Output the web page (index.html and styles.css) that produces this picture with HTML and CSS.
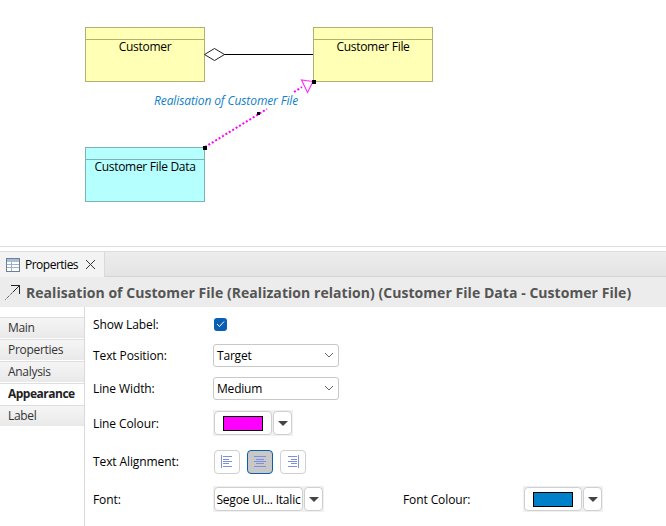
FILE: index.html
```html
<!DOCTYPE html>
<html lang="en">
<head>
  <meta charset="UTF-8" />
  <title>Properties</title>
  <link rel="stylesheet" href="styles.css">
</head>
<body>
  <!-- Diagram canvas -->
  <div class="canvas">
    <div class="node yellow node-customer"><div class="node-head"></div><div class="node-name">Customer</div></div>
    <div class="node yellow node-file"><div class="node-head"></div><div class="node-name">Customer File</div></div>
    <div class="node cyan node-data"><div class="node-head"></div><div class="node-name">Customer File Data</div></div>

    <svg class="wires" width="666" height="246" viewBox="0 0 666 246">
      <line x1="224" y1="54.5" x2="313" y2="54.5" stroke="#000" stroke-width="1"/>
      <polygon points="204.5,54.5 214.5,48.5 224.5,54.5 214.5,60.5" fill="#fff" stroke="#222" stroke-width="1"/>
      <line x1="205" y1="147" x2="267" y2="109" stroke="#ff00ff" stroke-width="2" stroke-dasharray="2 2"/>
      <line x1="294" y1="92" x2="302" y2="87" stroke="#ff00ff" stroke-width="2" stroke-dasharray="2 2"/>
      <polygon points="313,81.5 301.5,80 307.5,92.5" fill="#fff" stroke="#ff30ff" stroke-width="1.2"/>
      <rect x="203" y="146" width="4" height="4" fill="#000"/>
      <rect x="312" y="80" width="4" height="4" fill="#000"/>
      <rect x="257" y="112" width="3" height="3" fill="#000"/>
    </svg>
    <div class="wire-label">Realisation of Customer File</div>
  </div>

  <!-- Properties view -->
  <div class="view">
    <div class="tabstrip">
      <div class="view-tab">
        <svg class="tab-icon" width="15" height="14" viewBox="0 0 15 14">
          <rect x="0.5" y="0.5" width="13" height="13" fill="#fff" stroke="#6c7f96"/>
          <rect x="1" y="1" width="12" height="3" fill="#a9bdd6"/>
          <path d="M1 6.5h12M1 9.5h12M5.5 4v9" stroke="#9db1c9" fill="none"/>
        </svg>
        <span class="tab-name">Properties</span>
        <svg class="tab-close" width="11" height="11" viewBox="0 0 11 11">
          <path d="M1 1l9 9M10 1l-9 9" stroke="#333" stroke-width="1" fill="none"/>
        </svg>
      </div>
    </div>

    <div class="title-bar">
      <svg class="title-icon" width="16" height="15" viewBox="0 0 16 15">
        <path d="M0.5 14.5L8 7" stroke="#222" stroke-dasharray="1 1" fill="none"/>
        <path d="M8 7L14.5 0.5" stroke="#222" fill="none"/>
        <path d="M6 0.5h8.5V9" stroke="#222" fill="none"/>
      </svg>
      <span class="title-text">Realisation of Customer File (Realization relation) (Customer File Data - Customer File)</span>
    </div>

    <div class="panel">
      <ul class="side-tabs">
        <li>Main</li>
        <li>Properties</li>
        <li>Analysis</li>
        <li class="active">Appearance</li>
        <li>Label</li>
      </ul>

      <div class="form">
        <div class="row row-show">
          <label>Show Label:</label>
          <span class="checkbox">
            <svg width="9" height="8" viewBox="0 0 9 8"><path d="M1 4l2.5 2.5L8 1.5" stroke="#fff" stroke-width="1" fill="none"/></svg>
          </span>
        </div>
        <div class="row row-pos">
          <label>Text Position:</label>
          <div class="combo">Target<svg width="10" height="6" viewBox="0 0 10 6"><path d="M1 1l4 4 4-4" stroke="#666" fill="none"/></svg></div>
        </div>
        <div class="row row-width">
          <label>Line Width:</label>
          <div class="combo">Medium<svg width="10" height="6" viewBox="0 0 10 6"><path d="M1 1l4 4 4-4" stroke="#666" fill="none"/></svg></div>
        </div>
        <div class="row row-colour">
          <label>Line Colour:</label>
          <div class="btn-group">
            <div class="btn colour-btn"><span class="swatch magenta"></span></div>
            <div class="btn arrow-btn"><span class="arrow"></span></div>
          </div>
        </div>
        <div class="row row-align">
          <label>Text Alignment:</label>
          <div class="align-group">
            <div class="btn align-btn">
              <svg width="12" height="13" viewBox="0 0 12 13"><path d="M.5 0v13M2 1.5h9M2 4.5h6M2 6.5h9M2 8.5h6M2 11.5h9" stroke="#7d8fe0" fill="none"/></svg>
            </div>
            <div class="btn align-btn selected">
              <svg width="12" height="11" viewBox="0 0 12 11"><path d="M0 .5h12M2 3.5h8M0 5.5h12M2 7.5h8M0 10.5h12" stroke="#7d8fe0" fill="none"/></svg>
            </div>
            <div class="btn align-btn">
              <svg width="12" height="13" viewBox="0 0 12 13"><path d="M11.5 0v13M1 1.5h9M4 4.5h6M1 6.5h9M4 8.5h6M1 11.5h9" stroke="#7d8fe0" fill="none"/></svg>
            </div>
          </div>
        </div>
        <div class="row row-font">
          <label>Font:</label>
          <div class="btn-group">
            <div class="btn font-btn">Segoe UI... Italic</div>
            <div class="btn arrow-btn"><span class="arrow"></span></div>
          </div>
          <label class="font-colour-label">Font Colour:</label>
          <div class="btn-group">
            <div class="btn colour-btn"><span class="swatch blue"></span></div>
            <div class="btn arrow-btn"><span class="arrow"></span></div>
          </div>
        </div>
      </div>
    </div>
  </div>
</body>
</html>
```

FILE: styles.css
```css
* {
  box-sizing: border-box;
}

html, body {
  margin: 0;
  padding: 0;
}

body {
  width: 666px;
  height: 526px;
  overflow: hidden;
  background: #fff;
  color: #000;
  font-family: "Open Sans", Arial, sans-serif;
  font-size: 12px;
  display: flex;
  flex-direction: column;
}

/* canvas */
.canvas {
  position: relative;
  height: 247px;
  border-bottom: 1px solid #dcdcdc;
  flex: none;
}

.node {
  position: absolute;
  width: 120px;
  height: 55px;
  border: 1px solid #b0b070;
  text-align: center;
}

.node-head {
  height: 12px;
  border-bottom: 1px solid #b0b070;
}

.node-name {
  line-height: 14px;
  letter-spacing: -0.3px;
}

.yellow {
  background: #ffffb5;
}

.cyan {
  background: #b5ffff;
  border-color: #7eb2b2;
}

.cyan .node-head {
  border-color: #7eb2b2;
}

.node-customer { left: 85px; top: 27px; }
.node-file { left: 313px; top: 27px; }
.node-data { left: 85px; top: 147px; }

.wires {
  position: absolute;
  left: 0;
  top: 0;
}

.wire-label {
  position: absolute;
  left: 154px;
  top: 93px;
  line-height: 16px;
  font-style: italic;
  letter-spacing: -0.1px;
  color: #0f80c5;
  white-space: nowrap;
}

/* properties view */
.view {
  flex: 1;
  display: flex;
  flex-direction: column;
  margin-top: 4px;
  border-top: 1px solid #dcdcdc;
  min-height: 0;
}

.tabstrip {
  height: 25px;
  background: linear-gradient(#ececec, #e4e4e4);
  border-bottom: 1px solid #d4d4d4;
  flex: none;
}

.view-tab {
  width: 105px;
  height: 25px;
  background: #f3f3f3;
  border-right: 1px solid #d9d9d9;
  display: flex;
  align-items: center;
  padding-left: 6px;
}

.tab-icon {
  margin-right: 4px;
}

.tab-name {
  letter-spacing: -0.5px;
  width: 56px;
}

.tab-close {
  margin-left: 4px;
}

.title-bar {
  height: 30px;
  background: #ececec;
  display: flex;
  align-items: center;
  padding-left: 5px;
  flex: none;
}

.title-icon {
  margin-right: 5px;
}

.title-text {
  font-size: 14px;
  font-weight: bold;
  letter-spacing: 0.05px;
  color: #555;
  white-space: nowrap;
}

.panel {
  flex: 1;
  display: flex;
  min-height: 0;
}

.side-tabs {
  list-style: none;
  margin: 0;
  padding: 10px 0 0;
  width: 85px;
  border-right: 1px solid #d9d9d9;
  flex: none;
}

.side-tabs li {
  height: 22px;
  line-height: 20px;
  padding-left: 8px;
  letter-spacing: -0.3px;
  color: #333;
  background: linear-gradient(#f5f5f5, #e9e9e9);
  border-top: 1px solid #dedede;
  border-bottom: 1px solid #fff;
}

.side-tabs li.active {
  background: #fff;
  color: #222;
  font-weight: bold;
  letter-spacing: -0.5px;
}

.form {
  flex: 1;
  padding-left: 8px;
  position: relative;
}

.row {
  display: flex;
  align-items: center;
}

.row label {
  width: 120px;
  flex: none;
  letter-spacing: -0.1px;
}

.row-show { height: 24px; margin-top: 5px; }
.row-pos { height: 24px; margin-top: 7px; }
.row-width { height: 24px; margin-top: 9px; }
.row-colour { height: 26px; margin-top: 10px; }
.row-align { height: 25px; margin-top: 13px; }
.row-font { height: 26px; margin-top: 12px; }

.checkbox {
  width: 13px;
  height: 13px;
  margin-left: 1px;
  border-radius: 3px;
  background: #0a5fb4;
  display: flex;
  align-items: center;
  justify-content: center;
}

.combo {
  width: 126px;
  height: 23px;
  border: 1px solid #c8c8c8;
  border-radius: 3px;
  padding: 0 3px;
  letter-spacing: -0.2px;
  display: flex;
  align-items: center;
  justify-content: space-between;
}

.combo svg {
  margin-right: 1px;
}

.btn-group {
  display: flex;
  align-items: center;
  gap: 1px;
  height: 26px;
  padding: 0 1px;
  background: #f0f0f0;
}

.btn {
  height: 24px;
  background: #fff;
  border: 1px solid #cfcfcf;
  border-radius: 4px;
  display: flex;
  align-items: center;
  justify-content: center;
  flex: none;
}

.colour-btn {
  width: 58px;
}

.arrow-btn {
  width: 19px;
}

.font-btn {
  width: 89px;
  white-space: nowrap;
  letter-spacing: -0.2px;
}

.swatch {
  width: 40px;
  height: 15px;
  border: 1px solid #000;
}

.magenta { background: #ff00ff; }
.blue { background: #0080c8; }

.arrow {
  border-left: 5px solid transparent;
  border-right: 5px solid transparent;
  border-top: 5px solid #444;
}

.align-group {
  display: flex;
  gap: 7px;
  margin-left: 1px;
}

.align-btn {
  width: 26px;
}

.align-btn.selected {
  background: #c8c8c8;
  border-color: #0a5fa8;
}

.row .font-colour-label {
  width: auto;
  margin-left: 79px;
  margin-right: 53px;
}
```
